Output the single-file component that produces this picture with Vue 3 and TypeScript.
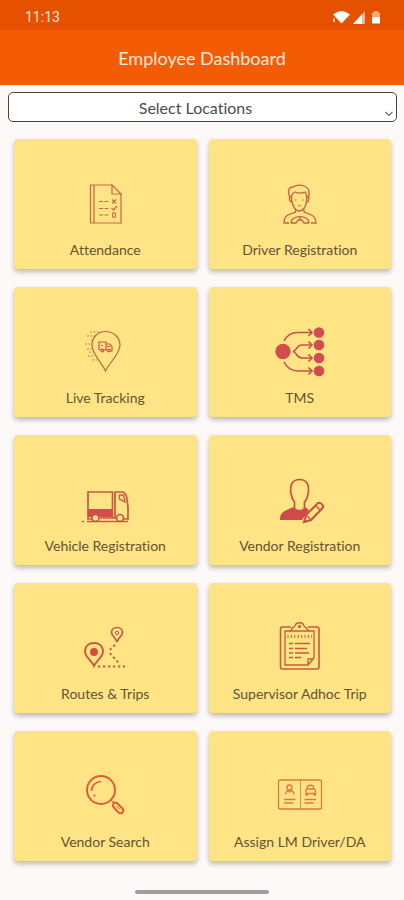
<script setup lang="ts">
import { ref } from 'vue'

interface Tile {
  id: string
  label: string
  viewBox: string
}

const location = ref<string>('')

const tiles: Tile[] = [
  { id: 'attendance', label: 'Attendance', viewBox: '0 2 70 60' },
  { id: 'driver', label: 'Driver Registration', viewBox: '0 2 70 60' },
  { id: 'tracking', label: 'Live Tracking', viewBox: '0 0 70 60' },
  { id: 'tms', label: 'TMS', viewBox: '0 0 70 60' },
  { id: 'vehicle', label: 'Vehicle Registration', viewBox: '0 -7 70 60' },
  { id: 'vendor', label: 'Vendor Registration', viewBox: '0 -2 70 60' },
  { id: 'routes', label: 'Routes & Trips', viewBox: '0 -1 70 60' },
  { id: 'supervisor', label: 'Supervisor Adhoc Trip', viewBox: '0 1 70 60' },
  { id: 'search', label: 'Vendor Search', viewBox: '0 -1 70 60' },
  { id: 'assign', label: 'Assign LM Driver/DA', viewBox: '0 -1 70 60' },
]
</script>

<template>
  <div class="app">
    <div class="status">
      <span class="time">11:13</span>
      <svg class="signals" width="52" height="16" viewBox="0 0 52 16" aria-hidden="true">
        <path d="M1 5.500Q9.500-1.500 18 5.500L9.500 14.500Z" fill="#fff" />
        <path d="M1 9.500h2v3.500H1z" fill="#fff" opacity=".7" />
        <path d="M21 15L33 2V15Z" fill="#f8b48d" />
        <path d="M21 15L30 5.200V15Z" fill="#fff" />
        <path d="M42 2h4v1.500H48V8h-8V3.500h2z" fill="#f8a67a" />
        <path d="M40 8h8v6.500h-8z" fill="#fff" />
      </svg>
    </div>
    <header class="header">
      <h1>Employee Dashboard</h1>
    </header>
    <main class="content">
      <div class="picker">
        <select v-model="location" aria-label="Select Locations">
          <option value="">Select Locations</option>
        </select>
        <svg class="chevron" width="10" height="6" viewBox="0 0 10 6" aria-hidden="true">
          <path d="M1.500 1L5 4.500L8.500 1" fill="none" stroke="#666" stroke-width="1.100" />
        </svg>
      </div>
      <nav class="grid" aria-label="Dashboard">
        <button v-for="tile in tiles" :key="tile.id" type="button" class="tile">
          <svg class="icon" width="70" height="60" :viewBox="tile.viewBox" aria-hidden="true">
            <g v-if="tile.id === 'attendance'" stroke="#c9683f" stroke-width="1.200">
              <path d="M20.500 15H42L51 24V53H20.500ZM24 15V53M42 15V24H51Z" />
              <path d="M29 31.500h4m1.500 0h4M29 38.500h4m1.500 0h4M29 45h4m1.500 0h4" />
              <path d="M42 29.500l4 4m0-4l-4 4M41.500 38l2 2 3.500-4" />
              <rect x="42.500" y="42.500" width="3" height="5" rx="1.400" />
            </g>
            <g v-else-if="tile.id === 'driver'" stroke="#c9603f" stroke-width="1.300">
              <path d="M25 28C22 20 24 17 28 17C34 13 44 16 44 22C44.500 25 43.500 27 43 29" />
              <path d="M26.500 28C26 24 28 23 30 22C34 24 38 23 40.500 22C42 25 42 28 41.500 31C41 37 38 41 34.500 41S27 37 26.500 28Z" />
              <path d="M26 27C23.500 26 24 32 27 32M42 27C45 26 44 32 41.500 32" />
              <path d="M30.500 39.500V42L23 45C20 46.500 19 49 19 53H24M39 39.500V42L46.500 45C50 47 51 49 51 53H46" />
              <path d="M26 53C26 44.500 44 44.500 44 53M26 53H31L33 50H37L39 53H44M35 47V50" />
              <path d="M30 30h1.500M37 30h1.500M33 35.500q1.700 1 3 0" stroke-width="1" />
            </g>
            <g v-else-if="tile.id === 'tracking'" stroke="#bd673c" stroke-width="1.200">
              <path d="M35.500 51C32 43 22 34 22 25C22 17 28 11.500 35.500 11.500S50 17 50 25C50 34 39 43 35.500 51Z" />
              <g stroke="#d05739">
                <path d="M29 30V22H36V30M36 24H40L42 27V31H40M29 30H31M34 30H38" />
                <circle cx="32.500" cy="30.500" r="1.300" />
                <circle cx="39" cy="30.500" r="1.300" />
                <path d="M31 25.500h2m4 1h3" />
              </g>
              <path d="M20 12H31M17 16H26M21 20H23M15 24H21M17 29H22M19 32H23M18 36H24M22 40H27" stroke-width=".8" stroke-dasharray="2 1.500" />
            </g>
            <g v-else-if="tile.id === 'tms'" stroke="#c65148" stroke-width="1.600">
              <g fill="#d24b4d" stroke="none">
                <circle cx="18" cy="31.500" r="7.700" />
                <circle cx="54" cy="12.500" r="5.300" />
                <circle cx="54" cy="25" r="5.300" />
                <circle cx="54" cy="38" r="5.300" />
                <circle cx="54" cy="51" r="5.300" />
              </g>
              <path d="M19 21C22 15 27 12.500 33 12.500H47M19 42C22 48 27 51 33 51H47M28 31.500C32 31 31 25 37 25H47M28 31.500C32 32 31 38 37 38H47" />
              <path d="M43.500 9L47 12.500L43.500 16M43.500 21.500L47 25L43.500 28.500M43.500 34.500L47 38L43.500 41.500M43.500 47.500L47 51L43.500 54.500" />
            </g>
            <g v-else-if="tile.id === 'vehicle'" stroke="#cb5740" stroke-width="1.700">
              <path d="M18 34H42.500V42H18Z" fill="#d64b4b" stroke="none" />
              <path d="M22 44H18V17H42.500V43M45 43V17H53Q56 18 57 24L58 32V44H54M47 43H30" />
              <path d="M49.500 20H53.500L55 27L49.500 24Z" stroke-width="1.300" />
              <circle cx="25.500" cy="43" r="3.500" fill="#ffe485" />
              <circle cx="50" cy="43" r="3.500" fill="#ffe485" />
              <path d="M12 46.500h2M17 46.500H58" stroke-width="1.400" />
            </g>
            <g v-else-if="tile.id === 'vendor'" stroke="#c95140" stroke-width="1.700">
              <path d="M15 50C15 42 19 41 29 37C32 41 37 41 40 37L44 40L37 50Z" fill="#d34949" stroke="none" />
              <path d="M29.500 39V32C26.500 29 27 26 26 24C24.500 14 28 9.500 34.500 9.500S45 14 43 24C42 28 42 30 39.500 32V39" />
              <path d="M39 52L41 45L53 33Q55 32 57 34.500Q59 36 57.500 38L46 50Z" fill="#ffe485" stroke-width="2" />
              <path d="M41 45L46 50M50.500 35.500L55.500 40.500M39 52L43 51" stroke-width="1.400" />
            </g>
            <g v-else-if="tile.id === 'routes'" stroke="#ca583a" stroke-width="1.900">
              <path d="M24 49C22 44 15 40 15 34.500C15 29 19 26 24 26S33 29 33 34.500C33 40 26 44 24 49Z" />
              <circle cx="24" cy="35" r="4" fill="#d54b43" stroke="none" />
              <path d="M47 25C46 21 41.500 19 41.500 15.500C41.500 12.500 44 10.500 47 10.500S52.500 12.500 52.500 15.500C52.500 19 48 21 47 25Z" stroke-width="1.700" />
              <circle cx="47" cy="16" r="1.700" stroke-width="1" />
              <path d="M45 28L40.500 32V37L50 47.500M28 49.500H55" stroke-dasharray="2.300 2.700" />
            </g>
            <g v-else-if="tile.id === 'supervisor'" stroke="#c75b3b" stroke-width="1.600">
              <path d="M26 12H17Q15.500 12 15.500 14V52Q15.500 54 17 54H52Q54 54 54 52V14Q54 12 52 12H43" />
              <path d="M26 16H20V50H43L49 43V16H43M43 50V44H49" stroke-width="1.300" />
              <path d="M26 16C26 12 30 13 30.500 10C31 7 38 7 38.500 10C39 13 43 12 43 16Z" stroke-width="1.400" />
              <circle cx="34.500" cy="11.500" r=".8" />
              <path d="M22.500 21.500H47" stroke-width="3" stroke-dasharray="1 2.400" />
              <path d="M24 28.500h4m2 0h15M24 33.500h4m2 0h12M24 38h4m2 0h14M24 42.500h4m2 0h6" stroke-width="1.300" />
            </g>
            <g v-else-if="tile.id === 'search'" stroke="#e55a33" stroke-width="2">
              <circle cx="31" cy="25" r="14" />
              <path d="M21.500 26C22 20 25.500 17 31 16.500" stroke-width="1.700" />
              <circle cx="24.500" cy="30.500" r=".7" stroke-width="1" />
              <path d="M43.500 37.500L47 38L53 44Q54 46 52 48Q50 49 48 47L43 41.500Z" />
              <path d="M46.500 41l3.500 3.500M41 35l3 3" stroke-width="1" />
            </g>
            <g v-else stroke="#dd7840" stroke-width="1.300">
              <rect x="13.500" y="15" width="43" height="29" rx="2" />
              <path d="M35.500 15V44" stroke-width=".8" />
              <circle cx="24.500" cy="22.500" r="2.500" />
              <path d="M20.500 29.500C21 26 22 26 23 25.500L24.500 27L26 25.500C28 26 28.500 27 29 29.500" />
              <path d="M41 28.500V24.500L42 24C42 19 49 19 49 24L50.500 25V28.500ZM42 24H49M41 28.500V30H43M50.500 28.500V30H48.500" />
              <path d="M19 34.500H30.500M19 38H28M39.500 34.500H51M39.500 38H48.500" />
            </g>
          </svg>
          <span class="label">{{ tile.label }}</span>
        </button>
      </nav>
    </main>
    <div class="home"></div>
  </div>
</template>

<style>
body {
  background: #fdf9f8;
}
</style>

<style scoped>
.app {
  display: flex;
  flex-direction: column;
  min-height: 100vh;
  box-sizing: border-box;
  padding-bottom: 6px;
  font-family: Lato, 'Noto Sans', sans-serif;
}
.status {
  display: flex;
  align-items: center;
  justify-content: space-between;
  height: 30px;
  padding: 4px 20px 0 25px;
  box-sizing: border-box;
  background: #e65100;
}
.time {
  font-family: Roboto, sans-serif;
  font-size: 14px;
  line-height: 20px;
  color: #fde6d8;
}
.header {
  display: flex;
  align-items: center;
  justify-content: center;
  height: 55px;
  background: #f35c05;
}
h1 {
  margin: 0;
  font-size: 18px;
  line-height: 24px;
  font-weight: 400;
  color: #ffe9da;
}
.content {
  padding: 7px 7px 0 8px;
}
.picker {
  position: relative;
}
select {
  display: block;
  width: 100%;
  height: 30px;
  padding: 2px 14px 0 0;
  border: 1px solid #444;
  border-radius: 5px;
  appearance: none;
  background: #fff;
  color: #4c4c4c;
  font: 400 16px/24px Lato, 'Noto Sans', sans-serif;
  font-variant-ligatures: none;
  text-align: center;
  text-align-last: center;
}
.chevron {
  position: absolute;
  right: 3px;
  bottom: 5px;
}
.grid {
  display: grid;
  grid-template-columns: 1fr 1fr;
  gap: 18px 12px;
  padding: 17px 6px 0;
}
.tile {
  display: flex;
  flex-direction: column;
  align-items: center;
  gap: 8px;
  min-width: 0;
  padding: 33px 0 9px;
  border: 0;
  border-radius: 4px;
  background: #ffe485;
  box-shadow: 0 3px 5px rgba(0, 0, 0, 0.26);
  color: #655333;
  font: 400 14px/20px Lato, 'Noto Sans', sans-serif;
  font-variant-ligatures: none;
}
.icon {
  display: block;
  fill: none;
}
.label {
  white-space: nowrap;
}
.home {
  width: 33%;
  height: 4px;
  margin: auto auto 0;
  border-radius: 2px;
  background: #9c9e9d;
}
</style>
